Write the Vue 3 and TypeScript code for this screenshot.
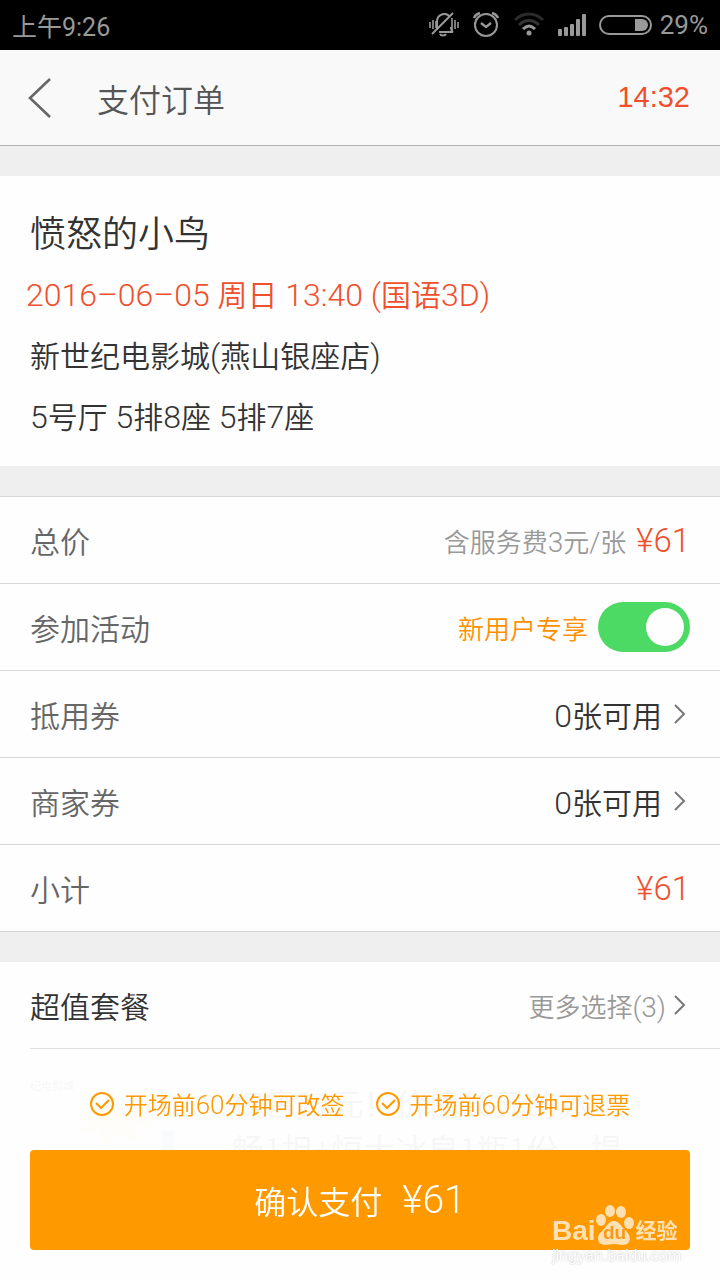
<script setup lang="ts">
import { ref } from 'vue'

interface Run {
  text: string
  latin: boolean
}

// Latin digits are set larger than the Chinese characters beside them.
function runs(value: string): Run[] {
  const parts = value.match(/[\u0020-\u00ff\u2013]+|[^\u0020-\u00ff\u2013]+/g) ?? []
  return parts.map((text) => ({ text, latin: /^[\u0020-\u00ff\u2013]/.test(text) }))
}

const joinOffer = ref(true)
const price = '¥61'
const coupons = [
  { name: '抵用券', value: '0张可用' },
  { name: '商家券', value: '0张可用' },
]
const notices = ['开场前60分钟可改签', '开场前60分钟可退票']
</script>

<template>
  <div class="page">
    <div class="status">
      <span class="clock">上午9:26</span>
      <div class="status-icons">
        <svg width="30" height="28" viewBox="0 0 30 28" fill="none" stroke="#999" stroke-width="2">
          <path d="M1 11v6M4 9v9M7 10v7M29 11v6M26 9v9M23 7v14" stroke-width="1.6" />
          <path d="M8 19V11c0-9 10-10 13-5M10 21h14c-2-1-2-3-2-5" />
          <path d="M3 23L24 2" />
          <path d="M11 23c1 2 5 2 6 0" />
        </svg>
        <svg width="28" height="28" viewBox="0 0 28 28" fill="none" stroke="#999" stroke-width="2">
          <circle cx="14" cy="14" r="11" />
          <path d="M9 12l5 4l5-4" stroke-width="2.4" />
          <path d="M2 7c1-3 3-4 6-5M26 7c-1-3-3-4-6-5" stroke-width="2.4" />
        </svg>
        <svg width="32" height="28" viewBox="0 0 32 28" fill="none" stroke-width="3">
          <path d="M2 9c8-8 20-8 28 0" stroke="#2b2b2b" />
          <path d="M6 14c6-6 14-6 20 0" stroke="#333" />
          <path d="M10 18c4-4 8-4 12 0" stroke="#999" />
          <circle cx="16" cy="22" r="2.5" fill="#999" />
        </svg>
        <svg width="28" height="28" viewBox="0 0 28 28" fill="#999">
          <rect x="0" y="18" width="4" height="7" rx="1" />
          <rect x="6" y="16" width="4" height="9" rx="1" />
          <rect x="12" y="13" width="4" height="12" rx="1" />
          <rect x="18" y="8" width="4" height="17" rx="1" />
          <rect x="24" y="3" width="4" height="22" rx="1" />
        </svg>
        <svg width="54" height="28" viewBox="0 0 54 28" fill="none">
          <rect x="1" y="5" width="51" height="18" rx="9" stroke="#999" stroke-width="2" />
          <path d="M36 8h7a6 6 0 0 1 0 12h-7z" fill="#999" />
        </svg>
        <span class="battery">29%</span>
      </div>
    </div>

    <header class="topbar">
      <button class="back" type="button" aria-label="返回">
        <svg width="24" height="40" viewBox="0 0 24 40" fill="none" stroke="#666" stroke-width="2.6">
          <path d="M22 1L2 20L22 39" />
        </svg>
      </button>
      <h1>支付订单</h1>
      <time class="countdown">14:32</time>
    </header>

    <main>
      <section class="movie">
        <h2>愤怒的小鸟</h2>
        <p class="when">
          <span v-for="(r, i) in runs('2016–06–05 周日 13:40 (国语3D)')" :key="i" :class="{ latin: r.latin }">{{ r.text }}</span>
        </p>
        <p>
          <span v-for="(r, i) in runs('新世纪电影城(燕山银座店)')" :key="i" :class="{ latin: r.latin }">{{ r.text }}</span>
        </p>
        <p>
          <span v-for="(r, i) in runs('5号厅 5排8座 5排7座')" :key="i" :class="{ latin: r.latin }">{{ r.text }}</span>
        </p>
      </section>

      <section class="bill">
        <div class="row">
          <span class="name">总价</span>
          <span class="hint"><span v-for="(r, i) in runs('含服务费3元/张')" :key="i" :class="{ digits: r.latin }">{{ r.text }}</span></span>
          <span class="price">{{ price }}</span>
        </div>
        <div class="row">
          <label class="name" for="offer">参加活动</label>
          <span class="offer">新用户专享</span>
          <input id="offer" v-model="joinOffer" class="switch" type="checkbox" />
        </div>
        <a v-for="c in coupons" :key="c.name" class="row" href="#">
          <span class="name">{{ c.name }}</span>
          <span class="value"><span v-for="(r, i) in runs(c.value)" :key="i" :class="{ latin: r.latin }">{{ r.text }}</span></span>
          <svg class="chevron" width="12" height="20" viewBox="0 0 12 20" fill="none" stroke="#777" stroke-width="2">
            <path d="M1 1L10 10L1 19" />
          </svg>
        </a>
        <div class="row">
          <span class="name">小计</span>
          <span class="price">{{ price }}</span>
        </div>
      </section>

      <section class="combo">
        <a class="row" href="#">
          <span class="name">超值套餐</span>
          <span class="more">更多选择<span class="digits">(3)</span></span>
          <svg class="chevron" width="12" height="20" viewBox="0 0 12 20" fill="none" stroke="#777" stroke-width="2">
            <path d="M1 1L10 10L1 19" />
          </svg>
        </a>
        <div class="deal">
          <div class="poster">
            <span class="cinema">纪电影城</span>
            <svg width="180" height="100" viewBox="0 0 180 100">
              <path d="M58 18l18 8l12-10l6 12l28-6l-14 16l16 12l-20 2l4 16l-20-8l-16 12l-4-16l-22 4l12-14l-14-10l18-2z" fill="#ffe680" />
              <rect x="132" y="56" width="12" height="30" rx="2" fill="#8fa9cc" />
            </svg>
          </div>
          <p>仅售11元！价值18元的冰<br />畅1担+恒大冰泉1瓶1份，提</p>
        </div>
      </section>
    </main>

    <footer>
      <ul>
        <li v-for="n in notices" :key="n">
          <svg width="24" height="24" viewBox="0 0 24 24" fill="none" stroke="#ff9900" stroke-width="2">
            <circle cx="12" cy="12" r="11" />
            <path d="M6 11l5 5l8-8" />
          </svg>
          <span><span v-for="(r, i) in runs(n)" :key="i" :class="{ digits: r.latin }">{{ r.text }}</span></span>
        </li>
      </ul>
      <button class="pay" type="button">确认支付<span class="sum">{{ price }}</span></button>
      <div class="mark">
        <div class="brand">
          <span class="bai">Bai</span>
          <span class="paw">
            <svg width="38" height="42" viewBox="0 0 38 42" fill="#ffe0b3">
              <ellipse cx="5" cy="16" rx="5" ry="6" />
              <ellipse cx="14" cy="7" rx="5" ry="6" />
              <ellipse cx="25" cy="8" rx="5" ry="6" />
              <ellipse cx="33" cy="19" rx="5" ry="6" />
              <path d="M18 17c6 0 8 7 12 10c6 5 5 14-3 14c-4 0-5-1-9-1s-6 1-9 1c-8 0-9-9-4-13c5-4 7-11 13-11z" />
            </svg>
            <span class="du">du</span>
          </span>
          <span class="jy">经验</span>
        </div>
        <div class="url">jingyan.baidu.com</div>
      </div>
    </footer>
  </div>
</template>

<style>
body {
  margin: 0;
  background: #fefefe;
}
</style>

<style scoped>
.page {
  box-sizing: border-box;
  height: 100vh;
  overflow: hidden;
  color: #333;
  background: #fefefe;
  font-family: "Noto Sans CJK SC", sans-serif;
  font-weight: 350;
  font-size: 30px;
}

h1,
h2,
p,
ul {
  margin: 0;
  padding: 0;
  font-weight: inherit;
}

button {
  border: 0;
  padding: 0;
  font: inherit;
}

a {
  color: inherit;
  text-decoration: none;
}

.status {
  display: flex;
  align-items: center;
  justify-content: space-between;
  height: 50px;
  padding: 0 12px;
  background: #000;
  color: #999;
  font-family: Roboto, "Noto Sans CJK SC", sans-serif;
  font-weight: 400;
  font-size: 26px;
}

.clock {
  font-size: 25px;
}

.status-icons {
  display: flex;
  align-items: center;
  gap: 13px;
}

.battery {
  margin-left: -6px;
}

.topbar {
  display: flex;
  align-items: center;
  height: 95px;
  padding: 0 30px 0 28px;
  background: #f9f9f9;
  border-bottom: 1px solid #b5b5b5;
}

.back {
  display: flex;
  width: 69px;
  background: none;
}

h1 {
  flex: 1;
  color: #555;
  font-size: 32px;
}

.countdown {
  color: #f0502d;
  font-family: "Liberation Sans", sans-serif;
  font-size: 29px;
  font-weight: 400;
}

main {
  display: flow-root;
  background: #efefef;
}

.movie {
  margin-top: 30px;
  padding: 25px 30px 20px;
  background: #fefefe;
}

h2 {
  margin-bottom: 2px;
  font-size: 36px;
  line-height: 60px;
}

.movie p {
  height: 61px;
  line-height: 61px;
}

.latin,
.digits,
.price,
.sum {
  font-family: Roboto, "Liberation Sans", sans-serif;
  font-weight: 300;
}

.latin {
  font-size: 32px;
  line-height: 1;
  white-space: pre;
}

.movie .when {
  margin-left: -4px;
  color: #f0502d;
}

.bill {
  margin-top: 30px;
  border-top: 1px solid #d6d6d6;
  background: #fefefe;
}

.row {
  display: flex;
  align-items: center;
  height: 86px;
  padding: 0 30px;
  border-bottom: 1px solid #d6d6d6;
}

.name {
  flex: 1;
  color: #666;
}

.hint {
  margin-right: 10px;
  color: #999;
  font-size: 26px;
}

.price {
  color: #f0502d;
  font-size: 33px;
}

.offer {
  color: #ff9000;
  font-size: 26px;
}

.switch {
  appearance: none;
  box-sizing: border-box;
  width: 92px;
  height: 50px;
  margin: 0 0 0 10px;
  padding: 6px;
  border-radius: 25px;
  background: #ccc;
}

.switch::before {
  content: "";
  display: block;
  width: 38px;
  height: 38px;
  border-radius: 50%;
  background: #fefefe;
}

.switch:checked {
  background: #4cd964;
}

.switch:checked::before {
  margin-left: auto;
}

.chevron {
  margin: 0 4px 0 12px;
}

.combo {
  margin-top: 30px;
  background: #fefefe;
}

.combo .row {
  margin-left: 30px;
  padding-left: 0;
  border-color: #e0e0e0;
}

.combo .name {
  color: #333;
}

.more {
  color: #999;
  font-size: 26px;
}

.digits {
  font-size: 28px;
  line-height: 1;
}

.more + .chevron {
  margin-left: 8px;
}

.deal {
  display: flex;
  gap: 22px;
  height: 231px;
  padding: 30px 30px 0;
  color: #333;
}

.poster {
  width: 180px;
}

.cinema {
  display: block;
  font-size: 11px;
  line-height: 12px;
}

.poster svg {
  display: block;
  margin-top: -16px;
}

.deal p {
  flex: 1;
  font-size: 32px;
  line-height: 46px;
  white-space: nowrap;
}

footer {
  position: fixed;
  right: 0;
  bottom: 0;
  left: 0;
  padding: 0 30px 30px;
  background: rgba(254, 254, 254, 0.96);
}

ul {
  display: flex;
  justify-content: center;
  gap: 31px;
  padding: 26px 0 28px;
  list-style: none;
  color: #ff9900;
  font-size: 24px;
  line-height: 36px;
}

li {
  display: flex;
  align-items: center;
  gap: 10px;
}

li .digits {
  font-size: 26px;
}

.pay {
  display: flex;
  align-items: center;
  justify-content: center;
  gap: 20px;
  width: 100%;
  height: 100px;
  border-radius: 4px;
  background: #ff9900;
  color: #fff;
  font-size: 32px;
}

.sum {
  font-size: 39px;
}

.mark {
  position: absolute;
  right: 40px;
  bottom: 14px;
  width: 128px;
  color: #ffe0b3;
  font-family: "Liberation Sans", "Noto Sans CJK SC", sans-serif;
  font-weight: 700;
}

.brand {
  display: flex;
  align-items: flex-end;
  height: 42px;
  font-size: 28px;
  line-height: 30px;
}

.paw {
  position: relative;
  display: flex;
}

.du {
  position: absolute;
  right: 0;
  bottom: 3px;
  left: 0;
  color: #f59a18;
  font-size: 19px;
  line-height: 20px;
  text-align: center;
}

.jy {
  margin-left: 2px;
  font-size: 21px;
  white-space: nowrap;
}

.url {
  color: #fefefe;
  font-size: 16px;
  font-weight: 400;
  line-height: 20px;
  text-shadow: 0 0 2px #bbb;
}
</style>
